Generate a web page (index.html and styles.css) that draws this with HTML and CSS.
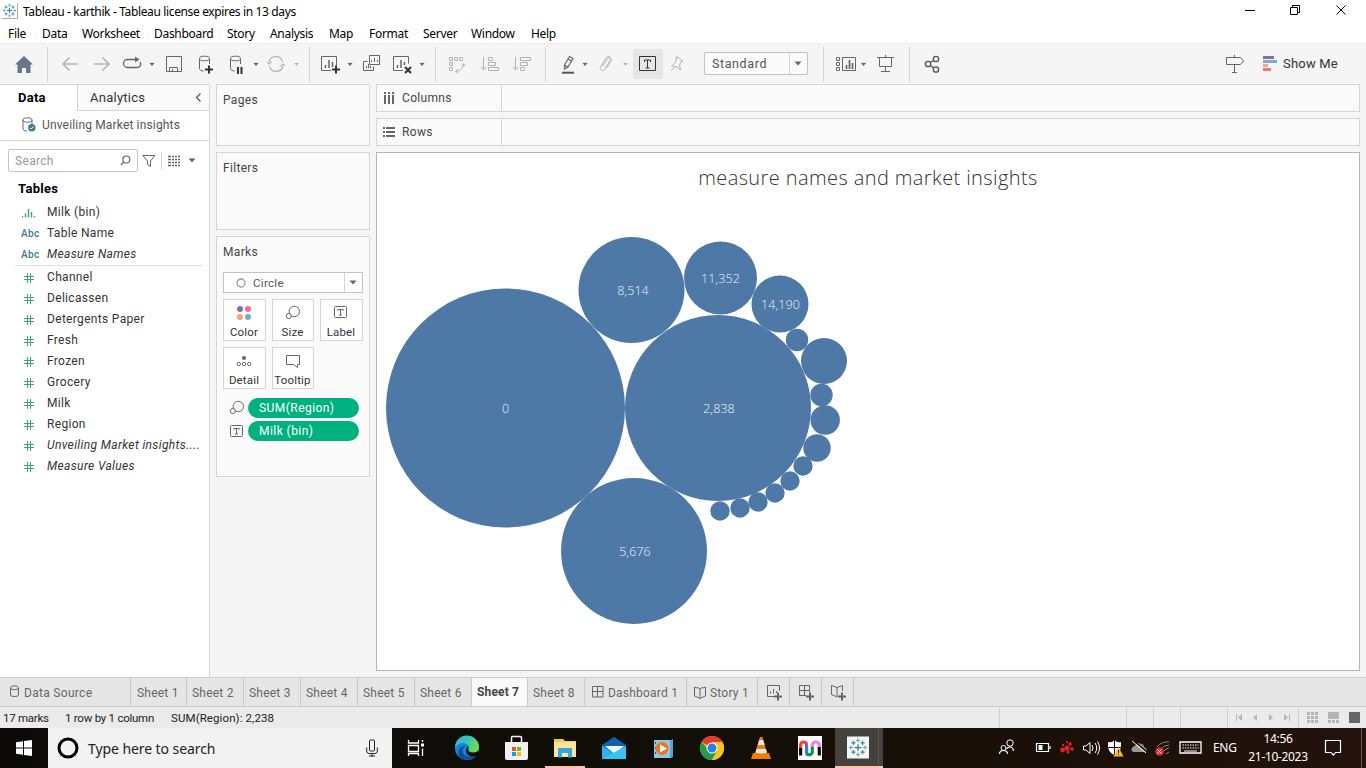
FILE: index.html
```html
<!DOCTYPE html>
<html lang="en">
<head>
<meta charset="utf-8">
<title>Tableau - karthik</title>
<link rel="stylesheet" href="styles.css">
</head>
<body>
<svg class="defs" width="0" height="0">
  <defs>
    <symbol id="hash" viewBox="0 0 10 10"><path d="M3.5 0v10M6.5 0v10M0 3.5h10M0 6.5h10" fill="none" stroke="#3fa37c"/></symbol>
    <symbol id="size" viewBox="0 0 16 16"><circle cx="9.3" cy="6.5" r="5.2"/><circle cx="3.8" cy="11" r="2.6" fill="#fafafa"/></symbol>
    <symbol id="label" viewBox="0 0 14 13"><rect x=".5" y=".5" width="12" height="11" rx="1"/><path d="M3.8 4.8V3.5h5.4v1.3M6.5 3.5v5.5M5 9h3"/></symbol>
    <symbol id="caret" viewBox="0 0 6 4"><path d="M.3.3h5.4L3 3.6z"/></symbol>
    <symbol id="spark" viewBox="0 0 24 24">
      <path d="M12 8v8M8 12h8" stroke="#2b7a9e" stroke-width="1.5"/>
      <path d="M12 1v5M9.5 3.5h5M12 18v5M9.5 20.500h5M1 12h5M3.500 9.500v5M18 12h5M20.500 9.500v5" stroke="#6a9fc0" stroke-width="1.200"/>
      <path d="M6.500 4v5M4 6.500h5M17.500 4v5M15 6.500h5M6.500 15v5M4 17.500h5M17.500 15v5M15 17.500h5" stroke="#3a86ac" stroke-width="1.400"/>
    </symbol>
  </defs>
</svg>

<header class="titlebar">
  <svg class="app-icon" width="16" height="16"><path d="M0 15.500h15.500V0" fill="none" stroke="#aaa"/><use href="#spark" width="15" height="15"/></svg>
  <span class="title">Tableau - karthik - Tableau license expires in 13 days</span>
  <svg class="win-controls" width="120" height="24" viewBox="1240 0 120 24" fill="none" stroke="#000">
    <path d="M1245 10.500h10M1290.500 7.500h7v7h-7zM1292.500 7.500v-2h7v7h-2M1336.500 5.500l9 9M1345.500 5.500l-9 9"/>
  </svg>
</header>

<nav class="menu">
  <span class="m-file">File</span><span class="m-data">Data</span><span class="m-work">Worksheet</span><span class="m-dash">Dashboard</span><span class="m-story">Story</span><span class="m-analysis">Analysis</span><span class="m-map">Map</span><span class="m-format">Format</span><span class="m-server">Server</span><span class="m-window">Window</span><span>Help</span>
</nav>

<div class="toolbar">
  <svg class="group" width="48" height="41" viewBox="0 43 48 41"><path d="M24 56l9 8.500h-2.500V73H26v-5h-4v5h-4.500v-8.500H15z" fill="#68778a"/></svg>
  <svg class="group" width="262" height="41" viewBox="48 43 262 41" fill="none" stroke="#666">
    <g stroke="#b4b4b4" stroke-width="1.500"><path d="M78 64H63M69.500 57.500L63 64l6.500 6.500M94 64h15M102.500 57.500L109 64l-6.500 6.500"/></g>
    <path d="M132 59.500h-4.500a4 4 0 0 0 0 8h9a3.500 3.500 0 0 0 3.500-5.500M130 59.500h6" stroke-width="1.300"/><path d="M135 56.500l4.500 3-4.500 3z" fill="#666" stroke="none"/>
    <path d="M166.500 56.500h15v15h-15zM169.500 71.500v-4h8v4M172.500 71v-2"/>
    <g id="cylinder"><path d="M209.500 64v-5.500M199.500 58.500v10c0 1.500 2 2.500 4 2.500"/><ellipse cx="204.500" cy="58.500" rx="5" ry="2.300"/></g>
    <path d="M205 69.500h8M209 65.500v8" stroke="#333" stroke-width="2"/>
    <use href="#cylinder" x="31"/><path d="M238 67v7M241.500 67v7" stroke="#333" stroke-width="2"/>
    <path d="M269 62a7 7 0 0 1 13.500-.5M283 66a7 7 0 0 1-13.500.5M267 62.500l2 1.500 2.500-2.500M285 65.500l-2-1.500-2.500 2.500" stroke="#b4b4b4" stroke-width="1.300"/>
    <g fill="#666" stroke="none"><use href="#caret" x="149" y="62.500" width="6" height="4"/><use href="#caret" x="253" y="62.500" width="6" height="4"/><use href="#caret" x="294" y="62.500" width="5" height="4" opacity=".5"/></g>
  </svg>
  <svg class="group" width="126" height="41" viewBox="310 43 126 41" fill="none" stroke="#666">
    <path d="M331 70.500h-9.500v-14h15v9"/><path d="M325.500 65v3M329 60v8M332.500 62v5" stroke-width="1.500"/><path d="M332 69.500h8M336 65.500v8" stroke="#333" stroke-width="2"/>
    <path d="M369.500 55.500h10v9h-10zM367.500 61.500h-4v9h10v-4M371.500 62v-2M374.500 62v-4M377.500 62v-2M366.500 68v-2M368.500 68v-4M370.500 68v-2"/>
    <path d="M403 70.500h-9.500v-14h15v7"/><path d="M397.500 65v3M401 60v8M404.500 62v3" stroke-width="1.500"/><path d="M405 67l6 6M411 67l-6 6" stroke="#333" stroke-width="2"/>
    <g fill="#666" stroke="none"><use href="#caret" x="347" y="62.500" width="6" height="4"/><use href="#caret" x="419" y="62.500" width="6" height="4"/></g>
  </svg>
  <svg class="group" width="110" height="41" viewBox="436 43 110 41" fill="none" stroke="#b2b2b2">
    <path d="M449.500 57.500h3v3h-3zM454.500 57.500h3v3h-3zM459.500 57.500h3v3h-3zM449.500 62.500h3v3h-3zM449.500 67.500h3v3h-3zM463.500 64c0 4-3 7-8 7.500M461.500 66l2-2.500 2 2.500M458 69l-2.500 2.500L458 73.500"/>
    <path d="M483.500 57v13M481 67l2.500 3 2.500-3M488.500 57.500h4v3h-4zM488.500 62.500h7v3h-7zM488.500 67.500h10v3h-10z"/>
    <path d="M515.500 57v13M513 67l2.500 3 2.500-3M520.500 57.500h10v3h-10zM520.500 62.500h7v3h-7zM520.500 67.500h4v3h-4z"/>
  </svg>
  <svg width="87" height="41" viewBox="546 43 87 41" fill="none" stroke="#666">
    <path d="M564.500 65l5-8.500 3.500 2-5 8.500-3.500 2zM564.500 65l3.500 2M568 59l3.500 2" stroke-width="1.200"/><path d="M562 72.700h12" stroke="#555" stroke-width="2"/>
    <path d="M602.500 66.500l4.500-7.500c1.500-2 4-.5 3 1.500l-5 8.500c-2 3-6 1-4.500-2l5.500-9c2-3 7-.5 5 3l-4 6.500" stroke="#b4b4b4"/>
    <g fill="#666" stroke="none"><use href="#caret" x="582" y="62.500" width="6" height="4"/><use href="#caret" x="623" y="62.500" width="5" height="4" opacity=".5"/></g>
  </svg>
  <svg class="label-on" width="30" height="30" viewBox="633 49 30 30" fill="none" stroke="#333"><path d="M639.500 56.500h16v14h-16z"/><path d="M644.500 62v-2h6v2M647.500 60v8M645.500 68h4"/></svg>
  <svg width="41" height="41" viewBox="663 43 41 41" fill="none" stroke="#b4b4b4"><path d="M676.500 56.500l6.500 4.500-2 .5-1.500 3.500 1 5-3.500-3-5.500-1 4-3.500 1-3.500zM675 67l-4 4"/></svg>
  <div class="combo"><span>Standard</span><i><svg width="8" height="5" viewBox="0 0 8 5"><path d="M.5.5h7L4 4.500z" fill="#666"/></svg></i></div>
  <svg class="group" width="102" height="41" viewBox="808 43 102 41" fill="none" stroke="#666"><path d="M823.500 47v35" stroke="#d4d4d4"/><path d="M836.500 57.500h3v3h-3zM836.500 62.500h3v3h-3zM836.500 67.500h3v3h-3zM842.500 57.500h13v13h-13z"/><path d="M846.500 65v4M849.500 60v9M852.500 63v6" stroke-width="1.700"/><use href="#caret" x="860.500" y="62.500" width="6" height="4" fill="#666" stroke="none"/><path d="M877 57.500h17M879.500 57.500v9h12v-9M885.500 55v2M885.500 67v4M881 71.500h9"/></svg>
  <svg width="40" height="41" viewBox="910 43 40 41" fill="none" stroke="#555" stroke-width="1.300"><circle cx="928" cy="64" r="2.700"/><circle cx="936" cy="59" r="2.700"/><circle cx="936" cy="69.500" r="2.700"/><path d="M930.500 62.500l3-2M930.500 65.500l3 2.500"/></svg>
  <svg class="showme-icons" width="60" height="41" viewBox="1220 43 60 41"><path d="M1226.500 57.500h14l3 3.500-3 3.500h-14zM1234.500 55v2.500M1234.500 64.500V72M1232 72.500h5" fill="none" stroke="#666"/><path d="M1263 56h11v3h-11z" fill="#8670a0"/><path d="M1263 60h14v3h-14z" fill="#85a8d0"/><path d="M1263 64h5v3h-5z" fill="#f8a878"/><path d="M1263 68h8v3h-8z" fill="#fa6e82"/></svg>
  <span class="showme">Show Me</span>
</div>

<main class="main">
  <aside class="data-pane">
    <div class="pane-tabs"><b>Data</b><span>Analytics<svg width="7" height="11" viewBox="0 0 7 11"><path d="M5.500 1.500l-4 4 4 4" fill="none" stroke="#555" stroke-width="1.200"/></svg></span></div>
    <div class="source"><svg width="15" height="16" viewBox="0 0 15 16" fill="none" stroke="#666"><ellipse cx="5.500" cy="3" rx="4.500" ry="2.200"/><path d="M1 3v9c0 1 1.500 2 4 2M10 3v4"/><circle cx="9.800" cy="10.800" r="3.700" fill="#3a7896" stroke="none"/><path d="M8 10.800l1.300 1.300 2.300-2.600" stroke="#fff"/></svg><span>Unveiling Market insights</span></div>
    <div class="search-row">
      <div class="search"><span>Search</span><svg width="11" height="11" viewBox="0 0 11 11" fill="none" stroke="#666" stroke-width="1.200"><circle cx="6.300" cy="4.500" r="3.500"/><path d="M3.800 7L1 10"/></svg></div>
      <svg class="funnel" width="14" height="14" viewBox="0 0 14 14" fill="none" stroke="#666"><path d="M.8 1.500h12L8.500 7v5.500l-3-2V7z"/></svg>
      <svg class="listview" width="19" height="18" viewBox="0 0 19 18"><path d="M.5 0v18" stroke="#d4d4d4"/><path d="M7 4.500h12M7 7.500h12M7 10.500h12M7 13.500h12" stroke="#666" stroke-width="1.300" stroke-dasharray="3 1 2 1 2 1 2"/></svg>
      <svg class="down" width="8" height="5" viewBox="0 0 8 5"><path d="M.5.500h7L4 4.500z" fill="#666"/></svg>
    </div>
    <h2>Tables</h2>
    <ul class="fields">
      <li><svg width="14" height="10" viewBox="0 0 14 10"><path d="M.5 8v1.500M3.500 5.500v4M6.500 1v8.500M9.500 4v5.500M12.500 8v1.500" stroke="#3fa37c" stroke-width="1.400"/></svg>Milk (bin)</li>
      <li><em class="abc">Abc</em>Table Name</li>
      <li class="it"><em class="abc">Abc</em>Measure Names</li>
    </ul>
    <ul class="fields measures">
      <li><svg width="10" height="10"><use href="#hash"/></svg>Channel</li>
      <li><svg width="10" height="10"><use href="#hash"/></svg>Delicassen</li>
      <li><svg width="10" height="10"><use href="#hash"/></svg>Detergents Paper</li>
      <li><svg width="10" height="10"><use href="#hash"/></svg>Fresh</li>
      <li><svg width="10" height="10"><use href="#hash"/></svg>Frozen</li>
      <li><svg width="10" height="10"><use href="#hash"/></svg>Grocery</li>
      <li><svg width="10" height="10"><use href="#hash"/></svg>Milk</li>
      <li><svg width="10" height="10"><use href="#hash"/></svg>Region</li>
      <li class="it"><svg width="10" height="10"><use href="#hash"/></svg>Unveiling Market insights....</li>
      <li class="it"><svg width="10" height="10"><use href="#hash"/></svg>Measure Values</li>
    </ul>
  </aside>

  <section class="cards">
    <div class="card pages">Pages</div>
    <div class="card filters">Filters</div>
    <div class="card marks">Marks
      <div class="mark-type"><svg width="10" height="10"><circle cx="5" cy="5" r="4" fill="none" stroke="#999" stroke-width="1.300"/></svg><span>Circle</span><i><svg width="8" height="5" viewBox="0 0 8 5"><path d="M.5.500h7L4 4.500z" fill="#666"/></svg></i></div>
      <div class="mark-grid">
        <div><svg width="16" height="16"><circle cx="4" cy="4" r="3" fill="#8670a0"/><circle cx="12" cy="4" r="3" fill="#fa6e82"/><circle cx="4" cy="12" r="3" fill="#f5a478"/><circle cx="12" cy="12" r="3" fill="#80a4cc"/></svg>Color</div>
        <div><svg width="16" height="16" class="line"><use href="#size"/></svg>Size</div>
        <div><svg width="15" height="16" class="line"><use href="#label" y="1" width="14" height="13"/></svg>Label</div>
        <div><svg width="16" height="16" class="line"><circle cx="8" cy="5" r="2" fill="#666" stroke="none"/><circle cx="2.800" cy="11" r="1.700"/><circle cx="8" cy="11" r="1.700"/><circle cx="13.200" cy="11" r="1.700"/></svg>Detail</div>
        <div><svg width="16" height="16" class="line"><path d="M1.500 2.500h13v9h-2v3l-4-3h-7z"/></svg>Tooltip</div>
      </div>
      <div class="pill-row"><svg width="16" height="16" class="line"><use href="#size"/></svg><span class="pill">SUM(Region)</span></div>
      <div class="pill-row"><svg width="16" height="14" class="line"><use href="#label" x="1" y="1" width="14" height="13"/></svg><span class="pill">Milk (bin)</span></div>
    </div>
  </section>

  <section class="work">
    <div class="shelf"><div><svg width="12" height="12"><path d="M2 0v12M6 0v12M10 0v12" stroke="#666" stroke-width="2" stroke-dasharray="2 1 9"/></svg>Columns</div></div>
    <div class="shelf"><div><svg width="12" height="12"><path d="M0 2h12M0 6h12M0 10h12" stroke="#666" stroke-width="2" stroke-dasharray="2 1 9"/></svg>Rows</div></div>
    <div class="sheet">
      <h1>measure names and market insights</h1>
      <svg class="bubbles" width="500" height="420" viewBox="377 220 500 420">
        <g fill="#4e79a7">
          <circle cx="505.500" cy="408" r="119.500"/><circle cx="718" cy="408" r="93"/><circle cx="634" cy="551" r="73"/><circle cx="631.500" cy="290" r="53"/><circle cx="720.500" cy="278" r="36.500"/><circle cx="780" cy="304" r="28.500"/>
          <circle cx="797" cy="340" r="11.200"/><circle cx="824" cy="361" r="23"/><circle cx="821.500" cy="395" r="11.200"/><circle cx="825.200" cy="420" r="14.700"/><circle cx="817" cy="448" r="13.700"/>
          <circle cx="803" cy="466" r="9.700"/><circle cx="790" cy="481" r="9.700"/><circle cx="775" cy="493" r="9.700"/><circle cx="758" cy="502" r="9.700"/><circle cx="740" cy="508" r="9.700"/><circle cx="720" cy="511" r="9.700"/>
        </g>
        <g class="bubble-labels" text-anchor="middle"><text x="505.500" y="413">0</text><text x="719" y="413">2,838</text><text x="635" y="556">5,676</text><text x="633" y="295">8,514</text><text x="720.500" y="283">11,352</text><text x="780.500" y="309">14,190</text></g>
      </svg>
    </div>
  </section>
</main>

<div class="tabs">
  <div class="t-source"><svg width="9" height="13" viewBox="0 0 9 13" fill="none" stroke="#666"><ellipse cx="4.500" cy="2.800" rx="4" ry="2"/><path d="M.5 3v7c0 2 8 2 8 0V3"/></svg>Data Source</div>
  <div class="t-first">Sheet 1</div><div>Sheet 2</div><div>Sheet 3</div><div>Sheet 4</div><div>Sheet 5</div><div>Sheet 6</div><div class="active">Sheet 7</div><div>Sheet 8</div>
  <div class="t-dash"><svg width="12" height="12" fill="none" stroke="#666"><path d="M.5.500h10.500v10.500H.5zM5.500.500v10.500M.5 5.500h10.500"/></svg>Dashboard 1</div>
  <div class="t-story"><svg width="12" height="13" fill="none" stroke="#666"><path d="M.5 1l2.500 1 1-.5 2 1.500 2-1.500 1 .5 2.500-1v9l-2.500 1-3 1.500-3-1.500L.5 10zM6 3v9"/></svg>Story 1</div>
  <div class="t-new"><svg width="17" height="16" fill="none" stroke="#666"><path d="M8 11.500H1.500v-11h12V6M4.500 8.500v-2M7.500 8.500V4M10.500 8V6"/><path d="M8 11.500h8M12 7.500v8" stroke-width="2"/></svg></div>
  <div class="t-new"><svg width="17" height="16" fill="none" stroke="#666"><path d="M8 10.500H1.500V.5h10V7M6.500.500v10M1.500 5.500h10"/><path d="M8 11.500h8M12 7.500v8" stroke-width="2"/></svg></div>
  <div class="t-new"><svg width="17" height="16" fill="none" stroke="#666"><path d="M1.500.500L7 2.500l5.500-2V6M1.500.500v9L7 12V2.500"/><path d="M8 11.500h8M12 7.500v8" stroke-width="2"/></svg></div>
</div>

<div class="status">
  <span class="s1">17 marks</span><span class="s2">1 row by 1 column</span><span>SUM(Region): 2,238</span>
  <svg width="367" height="21" viewBox="999 707 367 21"><path d="M999.500 708v20M1126.500 708v20M1153.500 708v20M1180.500 708v20M1227.500 708v20M1298.500 708v20" stroke="#ccc"/><g fill="#b5b5b5"><path d="M1236 714h1v7h-1zM1242 714v7l-4-3.500zM1257 714v7l-4-3.500zM1269 714v7l4-3.500zM1284 714v7l4-3.500zM1289 714h1v7h-1z"/><path d="M1307 712h3v3h-3zM1311 712h3v3h-3zM1315 712h3v3h-3zM1307 716h3v3h-3zM1311 716h3v3h-3zM1315 716h3v3h-3zM1307 720h3v3h-3zM1311 720h3v3h-3zM1315 720h3v3h-3zM1328 712h11v7h-11zM1328 720h3v3h-3zM1332 720h3v3h-3zM1336 720h3v3h-3z"/></g><path d="M1349 712h11v11h-11z" fill="#666"/></svg>
</div>

<footer class="taskbar">
  <svg class="start" width="48" height="40"><path d="M16 14.300l7-1v6.200h-7zM24 13.100l8-1.100v7.500h-8zM16 20.500h7v6.200l-7-1zM24 20.500h8V28l-8-1.100z" fill="#fff"/></svg>
  <div class="task-search"><svg width="22" height="22"><circle cx="11" cy="11" r="9" fill="none" stroke="#000" stroke-width="3"/></svg><span>Type here to search</span><svg class="mic" width="12" height="18" fill="none" stroke="#222"><rect x="3.500" y="1" width="5" height="11" rx="1"/><path d="M.7 8.500v3.500q0 2.500 2.500 2.500h5.600q2.500 0 2.500-2.500V8.500M6 14.500v3M3 17h6"/></svg></div>
  <svg class="app" width="49" height="40" viewBox="0 0 49 40" fill="none" stroke="#fff"><path d="M16.500 12v3h10v-3M16.500 17.500h10v6h-10zM16.500 28v-2.500h10V28M30.500 12v2M30.500 20.500V28" stroke-width="1.300"/><path d="M29 15.500h3v3h-3z" fill="#fff" stroke="none"/></svg>
  <svg class="app" width="49" height="40" viewBox="0 0 49 40">
    <defs><linearGradient id="edge-a" x1="0" y1="0" x2="1" y2=".4"><stop stop-color="#2fb5e8"/><stop offset=".55" stop-color="#37c4ba"/><stop offset="1" stop-color="#6ddc4c"/></linearGradient></defs>
    <circle cx="26" cy="20" r="12" fill="#1683da"/><path d="M14 20a12 12 0 0 1 24-1c0 5-5 6-9 5-2-1 0-2-1-5-2-5-10-6-14 1z" fill="url(#edge-a)"/><path d="M24 18c-6 6 0 14 11 9-4 6-12 6-16 2-4-5 0-11 5-11z" fill="#0d4d9b"/><path d="M27 18c1 2-2 4 2 6 3 1 6 1 8-1l1 3-3 2c-8 2-13-4-8-10z" fill="#110e08"/></svg>
  <svg class="app app-store" width="49" height="40" viewBox="0 0 49 40"><path d="M19.500 15v-5.500q0-1 1-1h8q1 0 1 1V15" fill="none" stroke="#f5f5f5" stroke-width="1.500"/><path d="M13 14h23v16q0 2-2 2H15q-2 0-2-2z" fill="#f1f1f1"/><path d="M20 19h4v4h-4z" fill="#f25022"/><path d="M25 19h4v4h-4z" fill="#7fba00"/><path d="M20 24h4v4h-4z" fill="#00a4ef"/><path d="M25 24h4v4h-4z" fill="#ffb900"/></svg>
  <svg class="app" width="49" height="40" viewBox="0 0 49 40"><path d="M4 38h40v2H4z" fill="#ffc4a3"/><path d="M13 11h9l2 2h11v16H13z" fill="#f5c748"/><path d="M13 14h22v15H13z" fill="#ffe59a"/><path d="M17 29.500V20h14v9.500h-4V25h-6v4.500z" fill="#32a8e4"/></svg>
  <svg class="app" width="49" height="40" viewBox="0 0 49 40"><path d="M12 18l12-9 12 9v12H12z" fill="#1683d2"/><path d="M12 17l12-8 12 8-12 8z" fill="#0f62ae"/><path d="M15 18h19l-9.500 8z" fill="#f7fcff"/><path d="M12 18l12 8-8 5h-4z" fill="#28b2ee"/><path d="M36 18L12 31h24z" fill="#36c3f6"/></svg>
  <svg class="app" width="49" height="40" viewBox="0 0 49 40"><path d="M15 12h17l2-1v18l-2 1H15z" fill="#5aa5c8"/><path d="M15 12h16v18H15z" fill="#8fc9df"/><path d="M16 14h1v2h-1zM16 19h1v2h-1zM16 24h1v2h-1z" fill="#23576f"/><circle cx="23" cy="20.500" r="6.500" fill="#ee7424"/><path d="M21 16.500l7 4-7 4z" fill="#fff"/></svg>
  <svg class="app" width="49" height="40" viewBox="0 0 49 40"><circle cx="24" cy="20" r="12" fill="#fbc516"/><path d="M24 20l-10.400-6a12 12 0 0 1 20.800 0z" fill="#e33b2e"/><path d="M24 20h-5l-5.400-6A12 12 0 0 0 24 32l5-9z" fill="#249b4c"/><path d="M24 14h10.400a12 12 0 0 1-10.400 18l5-9z" fill="#fbc516"/><circle cx="24" cy="20" r="5.500" fill="#fff"/><circle cx="24" cy="20" r="4.500" fill="#2b7de9"/></svg>
  <svg class="app" width="49" height="40" viewBox="0 0 49 40"><path d="M14 31l2-6h16l2 6z" fill="#f57c00"/><path d="M23 9h2.500l5 18q-6 3-13 0z" fill="#f57c00"/><path d="M22.200 12h4l1.500 5h-7zM19.500 21h9.500l1 3.500q-6 2-11.500 0z" fill="#e8e8e8"/></svg>
  <svg class="app" width="49" height="40" viewBox="0 0 49 40"><path d="M12 8h24v24H12z" fill="#fff"/><g fill="none" stroke-width="3.200"><path d="M14.600 27.500V19" stroke="#111"/><path d="M14.600 20v-2.500q0-3.500 3-3.500t3 3.500" stroke="#f04438"/><path d="M20.600 17v7.500q0 1.500 1 2" stroke="#3279ee"/><path d="M21 26q4 2 5.300-1.500V17" stroke="#09983d"/><path d="M26.300 19v-1.500q0-3.500 3.500-3.500t3.500 3.500V20" stroke="#f37cf0"/><path d="M33.300 19v8.500" stroke="#111"/></g></svg>
  <svg class="app app-active" width="48" height="40" viewBox="0 0 48 40"><path d="M43.500 0v40" stroke="#5b5753"/><path d="M0 38h48v2H0z" fill="#ffc4a3"/><path d="M12 8.500h22v22H12z" fill="#f6f6f4"/><use href="#spark" x="13" y="9.500" width="20" height="20"/></svg>
  <svg class="tray" width="210" height="40" viewBox="997 728 210 40" fill="none" stroke="#fff">
    <circle cx="1010" cy="743" r="3.200"/><circle cx="1003.500" cy="748" r="2.500"/><path d="M999.500 754q0-3.500 4-3.500t4 3.500M1006.500 749q1-2 3.500-2 3 0 3.500 4" stroke-width="1.200"/>
    <path d="M1036.500 743.500h12v8h-12zM1050 746v3" stroke-width="1.200"/><path d="M1038.500 745h4v5h-4z" fill="#fff" stroke="none"/>
    <g fill="#e51f2b" stroke="none"><circle cx="1067" cy="748" r="2.600"/><circle cx="1062.500" cy="750" r="2.400"/><circle cx="1070" cy="744" r="1.800"/><circle cx="1072" cy="749" r="1.800"/><circle cx="1068" cy="752" r="1.500"/><circle cx="1063" cy="745" r="1.200"/><circle cx="1067" cy="742" r="1.100"/></g>
    <path d="M1083.500 746v4h2.500l4 3.500v-11l-4 3.500zM1092 745q2 3 0 6M1095 743q3.500 5 0 10M1097.500 741.500q4 6.500 0 13"/>
    <path d="M1108 742q4 1 6.500-2 2.500 3 6.500 2v5q-1 6-6.500 8-5.500-2-6.500-8z" fill="#fff" stroke="none"/><path d="M1114.500 740v15M1108 747.500h14" stroke="#180f09"/><path d="M1118.500 747l5 9.500h-10z" fill="#f7bd19" stroke="none"/><path d="M1118.500 750v3M1118.500 754v1" stroke="#222"/>
    <path d="M1134 752q-4-1-2-4 1-2 3-2 2-5 6-2 3 0 3 3 4 2 2 5z" fill="#999" stroke="none"/><path d="M1133 740l14 12" stroke="#180f09" stroke-width="1.500"/><path d="M1132 741l14 12"/>
    <path d="M1157 747q5-6 12-5M1160 750q4-5 9-5M1163 752q3-4 6-4M1166 754l3-2" stroke="#888"/><circle cx="1159.500" cy="751.500" r="4.300" fill="#e6252e" stroke="none"/><path d="M1157.500 749.500l4 4M1161.500 749.500l-4 4"/>
    <path d="M1180 742h21v11h-21z" stroke-width="1.300"/><path d="M1182.500 745h16M1182.500 748h16" stroke-dasharray="1.500 1"/><path d="M1184 751h13"/>
  </svg>
  <span class="lang">ENG</span>
  <div class="clock"><span>14:56</span><span>21-10-2023</span></div>
  <svg class="notify" width="50" height="40" viewBox="1316 728 50 40" fill="none" stroke="#fff"><path d="M1325.500 740.500h15v12h-5l-2 2.500-2.500-2.500h-5.500z" stroke-width="1.200"/><path d="M1361.500 728v40" stroke="#685b54"/></svg>
</footer>
</body>
</html>
```
FILE: styles.css
```css
* { box-sizing: border-box; }
body { margin: 0; width: 1366px; height: 768px; overflow: hidden; display: flex; flex-direction: column; background: #f5f5f5; color: #333; font: 12px/16px Roboto, sans-serif; letter-spacing: .32px; white-space: nowrap; }
svg { display: block; flex: none; }
.defs { width: 0; height: 0; flex: none; }
i, em { font-style: normal; }
.line { fill: none; stroke: #666; }

.titlebar { height: 24px; flex: none; display: flex; background: #fff; padding-left: 2px; color: #000; font: 12px/24px "Noto Sans", sans-serif; letter-spacing: -.36px; }
.app-icon { margin: 3px 5px 0 0; }
.win-controls { margin-left: auto; margin-right: 6px; }
.menu { height: 19px; flex: none; display: flex; padding-left: 8px; background: #fff; color: #000; font: 12px/20px "Noto Sans", sans-serif; letter-spacing: -.3px; }
.m-file { width: 34px; } .m-data { width: 40px; } .m-work { width: 72px; } .m-dash { width: 73px; } .m-story { width: 43px; } .m-analysis { width: 59px; } .m-map { width: 40px; } .m-format { width: 54px; } .m-server { width: 48px; } .m-window { width: 60px; }

.toolbar { height: 41px; flex: none; display: flex; align-items: center; background: #f5f5f5; box-shadow: inset 0 1px #eee; }
.group { background: linear-gradient(#d4d4d4, #d4d4d4) right 4px / 1px 35px no-repeat; }
.label-on { background: #e6e6e6; }
.combo { display: flex; width: 104px; height: 23px; border: 1px solid #c3c3c3; border-radius: 1px; background: #fafafa; line-height: 21px; color: #555; font-size: 12.500px; letter-spacing: .6px; }
.combo span { padding-left: 7px; flex: 1; }
.combo i { width: 18px; border-left: 1px solid #d4d4d4; padding: 8px 4px; }
.showme-icons { margin-left: auto; }
.showme { width: 86px; padding-left: 3px; font-size: 13px; letter-spacing: .2px; }

.main { height: 593px; flex: none; display: flex; }
.data-pane { width: 210px; border-right: 1px solid #d4d4d4; background: #fff; }
.pane-tabs { height: 27px; display: flex; line-height: 26px; font-size: 13px; border-top: 1px solid #d4d4d4; letter-spacing: .25px; }
.pane-tabs b { width: 77px; padding-left: 18px; color: #000; font-weight: 700; }
.pane-tabs span { flex: 1; display: flex; justify-content: space-between; align-items: center; padding: 0 7px 0 12px; border: solid #d4d4d4; border-width: 0 0 1px 1px; background: #fafafa; line-height: 25px; }
.source { height: 30px; display: flex; align-items: center; padding: 0 0 2px 22px; gap: 5px; color: #555; border-bottom: 1px solid #d4d4d4; letter-spacing: .16px; }
.source svg { margin-top: 1px; }
.search-row { display: flex; align-items: center; padding: 8px 0 0 8px; height: 31px; }
.search { width: 130px; height: 23px; display: flex; align-items: center; justify-content: space-between; padding: 0 6px; border: 1px solid #c3c3c3; border-radius: 2px; color: #999; }
.funnel { margin: 0 5px 0 4px; }
.down { margin-left: 8px; }
h2 { margin: 7px 0 4px 18px; font: 700 13px/19px Roboto, sans-serif; color: #000; letter-spacing: .3px; }
.fields { list-style: none; margin: 0; padding: 0; }
.fields li { height: 21px; line-height: 21px; display: flex; align-items: center; }
.fields li > svg { margin: 0 13px 0 24px; }
.fields li > svg[width="14"] { margin: 0 11px 0 22px; }
.abc { width: 26px; margin-left: 21px; font-weight: 500; font-size: 10px; color: #3a7896; font-style: normal; }
.fields .it { font-style: italic; letter-spacing: .36px; }
.measures { margin: 0 7px 0 15px; border-top: 1px solid #ddd; padding-top: 1px; }
.measures li > svg { margin: 0 13px 0 9px; }

.cards { width: 154px; margin-left: 6px; display: flex; flex-direction: column; gap: 6px; }
.card { border: 1px solid #d4d4d4; background: #fafafa; padding: 7px 6px; color: #444; }
.pages { height: 62px; }
.filters { height: 78px; }
.marks { height: 241px; }
.mark-type { display: flex; align-items: center; height: 21px; margin-top: 12px; border: 1px solid #c3c3c3; background: #fff; padding-left: 12px; color: #555; font-size: 11.500px; }
.mark-type span { flex: 1; padding-left: 7px; }
.mark-type i { width: 18px; height: 19px; padding: 7px 4px; border-left: 1px solid #d4d4d4; }
.mark-grid { display: grid; grid-template-columns: 43px 42px 43px; justify-content: space-between; gap: 6px 0; margin: 6px 0 9px; }
.mark-grid div { height: 42px; border: 1px solid #d4d4d4; background: #fff; display: flex; flex-direction: column; align-items: center; padding: 5px 1px 0 0; gap: 3px; font-size: 11.500px; letter-spacing: .15px; color: #333; }
.pill-row { height: 20px; margin: 0 4px 3px 6px; display: flex; align-items: center; justify-content: space-between; }
.pill { width: 111px; height: 20px; border-radius: 10px; background: #00b180; color: #fff; padding-left: 11px; line-height: 20px; letter-spacing: .45px; }

.work { width: 984px; margin-left: 6px; }
.shelf { height: 28px; margin-bottom: 6px; border: 1px solid #d4d4d4; background: #fafafa; color: #444; }
.shelf div { width: 125px; height: 26px; border-right: 1px solid #d4d4d4; display: flex; align-items: center; padding-left: 6px; gap: 7px; }
.sheet { height: 519px; border: 1px solid #b4b4b4; background: #fff; }
h1 { margin: 11px 0 0; text-align: center; font: 300 20px/28px "Open Sans", sans-serif; letter-spacing: .4px; color: #333; }
.bubbles { margin-top: 28px; }
.bubble-labels { fill: #edf2f7; font: 300 12.500px "Open Sans", sans-serif; letter-spacing: .1px; }

.tabs { height: 30px; flex: none; display: flex; border: solid #ccc; border-width: 1px 0; background: #e6e6e6; color: #666; }
.tabs div { width: 57px; border-right: 1px solid #c8c8c8; display: flex; align-items: center; padding: 1px 0 0 5px; letter-spacing: .22px; }
.tabs .t-source { width: 131px; padding-left: 10px; gap: 5px; letter-spacing: .3px; }
.tabs .t-source svg { margin-top: -2px; }
.tabs .t-first { width: 56px; padding-left: 6px; }
.tabs .active { width: 56px; padding-top: 0; background: #fafafa; color: #444; font-weight: 700; letter-spacing: .15px; }
.tabs .t-dash { width: 102px; gap: 4px; padding-left: 7px; }
.tabs .t-story { width: 71px; gap: 4px; padding-left: 7px; }
.tabs .t-dash svg, .tabs .t-story svg { margin-top: -1px; }
.tabs .t-new { width: 32px; padding-left: 8px; }
.status { height: 21px; flex: none; display: flex; background: #ebebeb; padding-left: 3px; font-size: 11.500px; line-height: 22px; letter-spacing: .1px; color: #222; }
.status svg { margin-left: auto; }
.s1 { width: 62px; letter-spacing: -.25px; } .s2 { width: 106px; letter-spacing: -.25px; }

.taskbar { height: 40px; flex: none; display: flex; background: linear-gradient(90deg, #0c0a07, #120f08 50%, #1b1009 78%, #24130c); color: #fff; font-family: "Noto Sans", sans-serif; }
.task-search { width: 344px; display: flex; align-items: center; padding: 0 14px 0 9px; background: #f2f2f2; color: #222; font-size: 14px; letter-spacing: -.08px; }
.task-search span { padding: 1px 0 0 9px; }
.mic { margin-left: auto; }
.app-store { margin-left: 2px; }
.app-active { background: #45423e; }
.tray { margin-left: auto; }
.lang { width: 36px; padding-left: 6px; line-height: 40px; letter-spacing: -.3px; }
.clock { width: 73px; display: flex; flex-direction: column; align-items: center; padding: 2px 3px 0 0; line-height: 18px; letter-spacing: -.33px; }
```
